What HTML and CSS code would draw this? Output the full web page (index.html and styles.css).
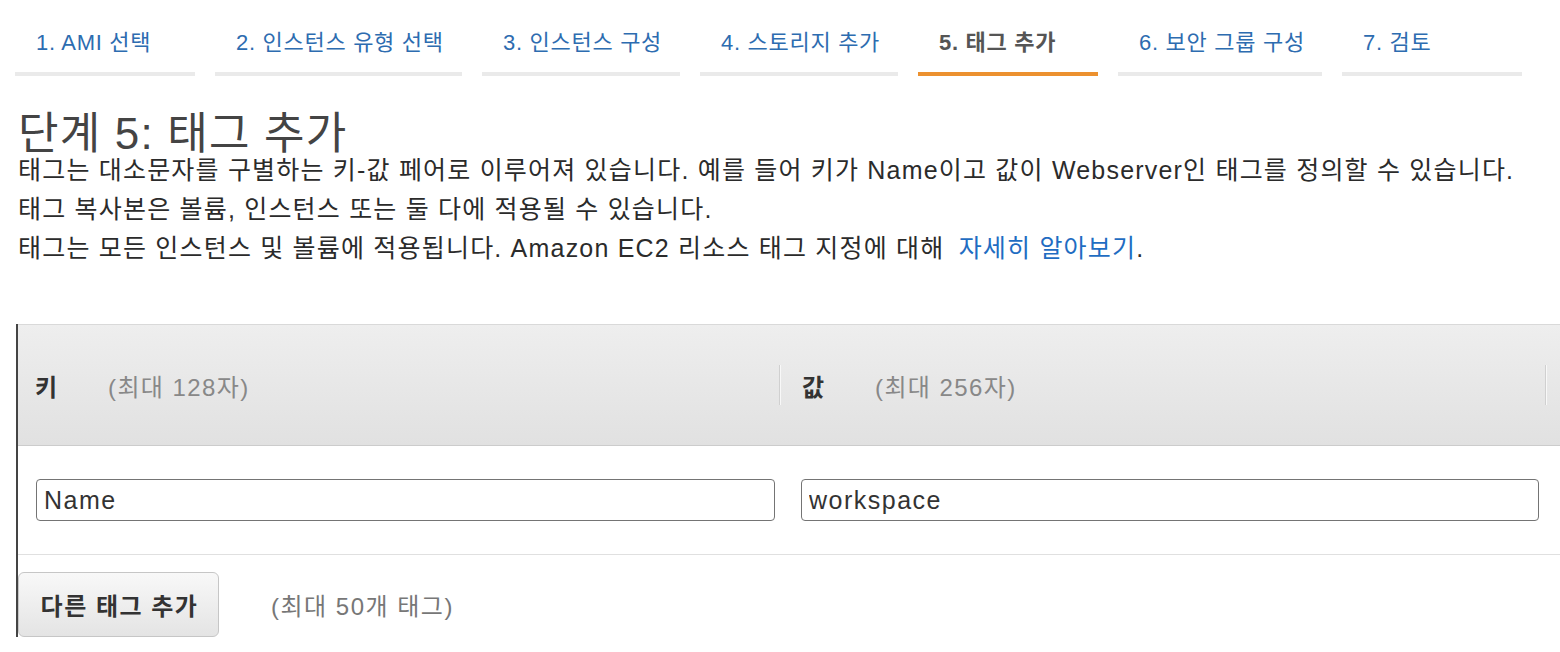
FILE: index.html
```html
<!DOCTYPE html>
<html lang="ko">
<head>
<meta charset="utf-8">
<title>단계 5: 태그 추가</title>
<link rel="stylesheet" href="styles.css">
</head>
<body>
<nav class="steps">
  <a class="step step-1" href="#">1. AMI 선택</a>
  <a class="step step-2" href="#">2. 인스턴스 유형 선택</a>
  <a class="step step-3" href="#">3. 인스턴스 구성</a>
  <a class="step step-4" href="#">4. 스토리지 추가</a>
  <span class="step step-5 active">5. 태그 추가</span>
  <a class="step step-6" href="#">6. 보안 그룹 구성</a>
  <a class="step step-7" href="#">7. 검토</a>
</nav>

<main class="content">
  <h1 class="title">단계 5: 태그 추가</h1>
  <div class="intro">
    <p>태그는 대소문자를 구별하는 키-값 페어로 이루어져 있습니다. 예를 들어 키가 Name이고 값이 Webserver인 태그를 정의할 수 있습니다.</p>
    <p>태그 복사본은 볼륨, 인스턴스 또는 둘 다에 적용될 수 있습니다.</p>
    <p>태그는 모든 인스턴스 및 볼륨에 적용됩니다. Amazon EC2 리소스 태그 지정에 대해 <a class="link" href="#">자세히 알아보기</a>.</p>
  </div>

  <section class="tag-editor">
    <div class="tag-table">
      <div class="tag-head">
        <div class="head-cell head-key"><strong>키</strong><span class="hint">(최대 128자)</span></div>
        <div class="head-cell head-value"><strong>값</strong><span class="hint">(최대 256자)</span></div>
        <div class="head-cell head-extra"></div>
      </div>
      <div class="tag-row">
        <input class="field field-key" type="text" value="Name">
        <input class="field field-value" type="text" value="workspace">
      </div>
    </div>
    <div class="tag-footer">
      <button class="add-btn" type="button">다른 태그 추가</button>
      <span class="footer-hint">(최대 50개 태그)</span>
    </div>
  </section>
</main>
</body>
</html>
```

FILE: styles.css
```css
html, body {
  margin: 0;
  padding: 0;
  background: #ffffff;
  overflow: hidden;
}

body {
  font-family: "Liberation Sans", "Noto Sans CJK KR", sans-serif;
  color: #333333;
}

/* Steps */
.steps {
  display: flex;
  gap: 20px;
  padding-left: 15px;
}

.step {
  box-sizing: border-box;
  flex: none;
  min-width: 180px;
  padding: 27px 21px 13px;
  line-height: 32px;
  font-size: 22px;
  letter-spacing: 0.7px;
  color: #2d6cb0;
  text-decoration: none;
  border-bottom: 4px solid #eaeaea;
  white-space: nowrap;
}

.step-2 { width: 247px; }
.step-3 { width: 198px; }
.step-4 { width: 198px; }
.step-6 { width: 204px; }

.step.active {
  color: #555555;
  font-weight: bold;
  border-bottom-color: #ec912f;
}

/* Content */
.content {
  padding-left: 18px;
}

.title {
  margin: 40px 0 0;
  font-size: 44px;
  line-height: 35px;
  letter-spacing: 1.2px;
  font-weight: normal;
  color: #444444;
}

.intro {
  font-size: 25px;
  line-height: 39px;
  letter-spacing: 1.2px;
  color: #2b2b2b;
}

.intro p {
  margin: 0;
  white-space: nowrap;
}

.link {
  color: #1f6dc2;
  text-decoration: none;
  margin-left: 6px;
}

/* Tag editor */
.tag-editor {
  margin-top: 56px;
  margin-left: -2px;
  border-left: 2px solid #444444;
}

.tag-table {
  margin-right: -20px;
}

.tag-head {
  display: flex;
  align-items: center;
  height: 120px;
  border-top: 1px solid #d9d9d9;
  border-bottom: 1px solid #cccccc;
  background: linear-gradient(#eeeeee, #e1e1e1);
}

.head-cell {
  display: flex;
  align-items: center;
  box-sizing: border-box;
  height: 40px;
  font-size: 24px;
  letter-spacing: 1.4px;
}

.head-cell strong {
  display: inline-block;
  width: 73px;
  color: #333333;
  font-weight: bold;
}

.hint {
  color: #888888;
}

.head-key {
  width: 761px;
  padding-left: 17px;
}

.head-value {
  width: 766px;
  padding-left: 22px;
  border-left: 1px solid #d0d0d0;
  box-shadow: inset 1px 0 #f8f8f8;
}

.head-extra {
  flex: 1;
  border-left: 1px solid #d0d0d0;
  box-shadow: inset 1px 0 #f8f8f8;
}

.tag-row {
  display: flex;
  align-items: center;
  gap: 26px;
  height: 108px;
  padding-left: 18px;
  border-bottom: 1px solid #e0e0e0;
}

.field {
  box-sizing: border-box;
  height: 42px;
  margin: 0;
  padding: 0 7px;
  font-family: "Liberation Sans", "Noto Sans CJK KR", sans-serif;
  font-size: 25px;
  letter-spacing: 1.5px;
  color: #333333;
  border: 1px solid #747474;
  border-radius: 4px;
  background: #ffffff;
  outline: none;
}

.field-key { width: 739px; }
.field-value { width: 738px; }

.tag-footer {
  display: flex;
  align-items: center;
  padding-top: 17px;
}

.add-btn {
  box-sizing: border-box;
  width: 201px;
  height: 65px;
  margin: 0;
  padding: 0 0 0 2px;
  font-family: "Liberation Sans", "Noto Sans CJK KR", sans-serif;
  font-size: 24px;
  letter-spacing: 1.5px;
  font-weight: bold;
  color: #333333;
  border: 1px solid #c6c6c6;
  border-radius: 6px;
  background: linear-gradient(#f8f8f8, #e4e4e4);
}

.footer-hint {
  margin-left: 52px;
  font-size: 24px;
  letter-spacing: 1.5px;
  color: #777777;
}
```
